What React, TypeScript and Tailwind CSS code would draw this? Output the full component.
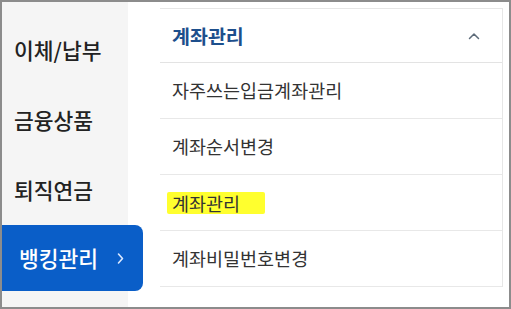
const font = { fontFamily: '"Noto Sans CJK KR", "Noto Sans", sans-serif' };

const sideItems = ["이체/납부", "금융상품", "퇴직연금"];
const subItems = ["자주쓰는입금계좌관리", "계좌순서변경", "계좌관리", "계좌비밀번호변경"];

export default function App() {
  return (
    <div
      className="w-[511px] h-[309px] border-2 border-[#8c8c8c] bg-white flex overflow-hidden"
      style={font}
    >
      {/* left menu */}
      <div className="w-[126px] shrink-0 bg-[#f5f5f5] pt-[13px] flex flex-col">
        {sideItems.map((label) => (
          <div
            key={label}
            className="h-[70px] flex items-center pl-[12px] text-[21.5px] font-medium text-[#222]"
          >
            {label}
          </div>
        ))}
        <div className="relative z-10 w-[141px] h-[66px] bg-[#0a5ec8] rounded-r-[8px] flex items-center pl-[17px] text-[21.5px] font-medium text-white">
          뱅킹관리
          <svg className="ml-[19px]" width="7" height="13" viewBox="0 0 7 13" fill="none">
            <path d="M1.5 2 L5.5 6.5 L1.5 11" stroke="#dbe8ff" strokeWidth="1.6" strokeLinecap="round" strokeLinejoin="round" />
          </svg>
        </div>
      </div>

      {/* right panel */}
      <div className="flex-1 pl-[32px] pr-[6px] pt-[6px]">
        <div className="border-t border-r border-[#e6e6e6]">
          <div className="h-[54px] flex items-center justify-between pl-[12px] pr-[22px] border-b border-[#e3e3e3]">
            <span className="text-[19.5px] font-semibold text-[#1d4f8c]">계좌관리</span>
            <svg width="12" height="8" viewBox="0 0 12 8" fill="none">
              <path d="M1.5 6.5 L6 2 L10.5 6.5" stroke="#5d6b79" strokeWidth="1.5" strokeLinecap="round" strokeLinejoin="round" />
            </svg>
          </div>
          {subItems.map((label, i) => (
            <div
              key={label}
              className="h-[56px] flex items-center pl-[12px] border-b border-[#e8e8e8] text-[18.5px] text-[#333]"
            >
              {i === 2 ? (
                <span className="bg-[#ffff2e] -ml-[5px] pl-[5px] pr-[25px] leading-[22px] rounded-[2px]">
                  {label}
                </span>
              ) : (
                label
              )}
            </div>
          ))}
        </div>
      </div>
    </div>
  );
}
